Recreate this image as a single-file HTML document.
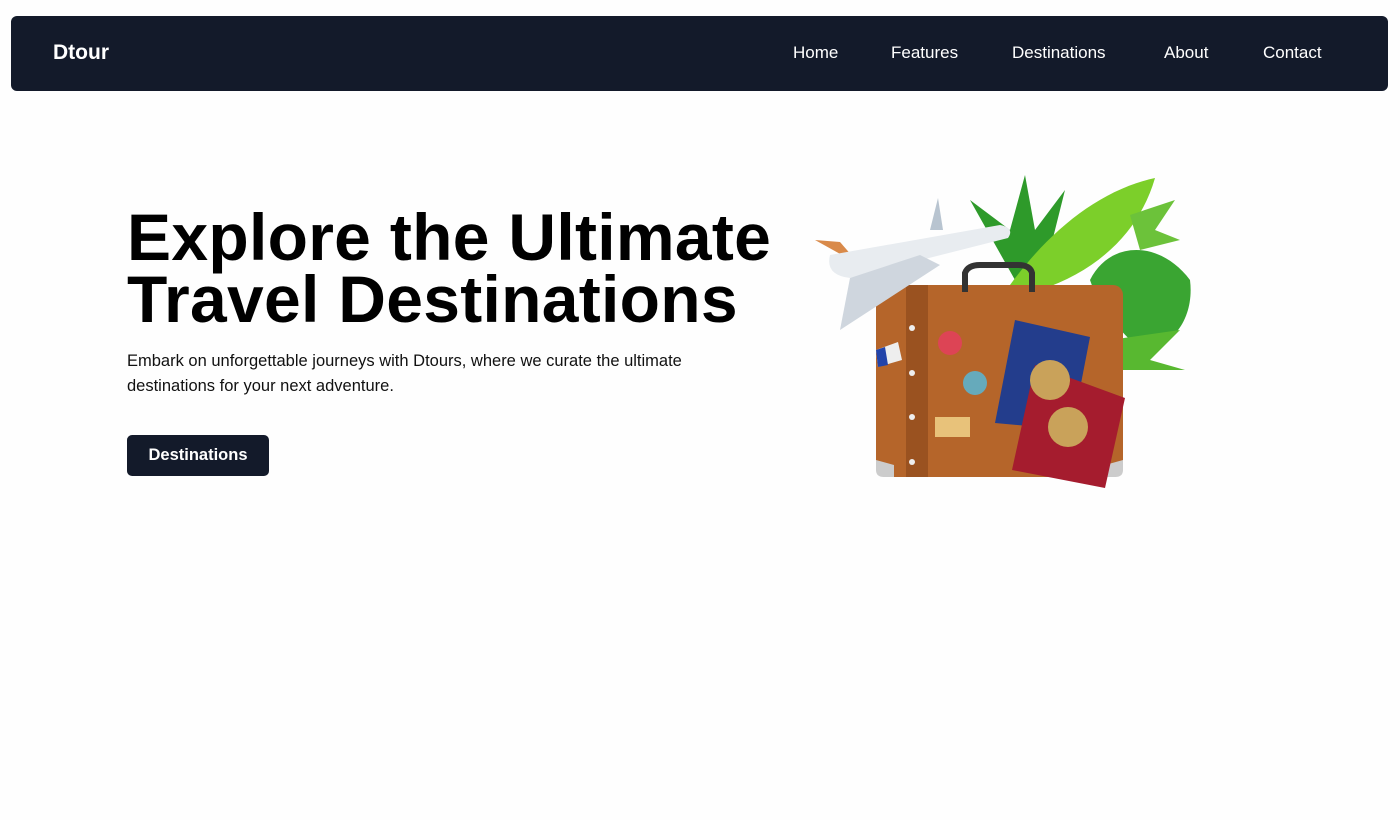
<!DOCTYPE html>
<html><head><style>
*{margin:0;padding:0;box-sizing:border-box}
body{width:1400px;height:820px;background:#fefefe;font-family:"Liberation Sans",sans-serif;position:relative;overflow:hidden}
nav{position:absolute;left:11px;top:16px;width:1377px;height:75px;background:#131a2a;border-radius:6px;color:#fff}
.logo{position:absolute;left:42px;top:25px;font-weight:bold;font-size:21px}
.links a{position:absolute;top:27px;font-size:17px;color:#fff;text-decoration:none}
h1{position:absolute;left:127px;top:206px;font-size:66px;line-height:62px;font-weight:bold;color:#000;letter-spacing:0.3px}
p{position:absolute;left:127px;top:349px;font-size:16.5px;line-height:24.5px;color:#111;width:640px}
.btn{position:absolute;left:127px;top:435px;width:142px;height:41px;background:#131a2a;border-radius:5px;color:#fff;font-weight:bold;font-size:16.5px;text-align:center;line-height:41px}
svg{position:absolute;left:810px;top:170px}
</style></head><body>
<nav><div class="logo">Dtour</div>
<div class="links"><a style="left:782px">Home</a><a style="left:880px">Features</a><a style="left:1001px">Destinations</a><a style="left:1153px">About</a><a style="left:1252px">Contact</a></div></nav>
<h1>Explore the Ultimate<br>Travel Destinations</h1>
<p>Embark on unforgettable journeys with Dtours, where we curate the ultimate destinations for your next adventure.</p>
<div class="btn">Destinations</div>
<svg width="390" height="335" viewBox="0 0 390 335">
<g fill="#2e9a2a">
<path d="M205 110 L160 30 L200 60 L215 5 L225 60 L255 20 L240 80 L280 60 L230 110Z"/>
</g>
<path d="M200 115 C240 60 290 20 345 8 C330 60 290 100 230 120Z" fill="#7ccf2a"/>
<path d="M280 110 C300 70 350 70 380 110 C385 150 360 180 330 180 C310 160 290 140 280 110Z" fill="#3aa532"/>
<path d="M300 170 L370 160 L340 190 L375 200 L310 200Z" fill="#58b830"/>
<path d="M320 45 L365 30 L345 60 L370 70 L330 80Z" fill="#6cc23a"/>
<rect x="66" y="115" width="247" height="192" rx="10" fill="#b5652a"/>
<rect x="96" y="115" width="22" height="192" fill="#9a5220"/>
<path d="M66 290 L66 300 Q66 307 74 307 L84 307 L84 295 Z" fill="#ccc"/><path d="M313 290 L313 300 Q313 307 305 307 L295 307 L295 295Z" fill="#ccc"/>
<path d="M155 122 V103 Q158 95 170 95 H208 Q220 95 222 103 V122" fill="none" stroke="#333" stroke-width="6"/>
<g fill="#eee"><circle cx="102" cy="158" r="3"/><circle cx="102" cy="203" r="3"/><circle cx="102" cy="247" r="3"/><circle cx="102" cy="292" r="3"/></g>
<path d="M66 180 L88 172 L92 190 L68 197Z" fill="#eee"/><path d="M66 180 L75 177 L78 195 L68 197Z" fill="#2244aa"/>
<circle cx="140" cy="173" r="12" fill="#d45"/>
<circle cx="165" cy="213" r="12" fill="#6ab"/>
<rect x="125" y="247" width="35" height="20" fill="#e8c27a"/>
<path d="M205 150 L280 167 L262 260 L185 253Z" fill="#233d8c"/>
<path d="M225 195 L315 228 L295 318 L202 300Z" fill="#a51c2e"/>
<circle cx="240" cy="210" r="20" fill="#c9a25a"/><circle cx="258" cy="257" r="20" fill="#c9a25a"/>
<path d="M5 70 L30 72 L50 95 Z" fill="#d98a4a"/>
<path d="M20 85 L190 55 Q205 58 198 68 L40 108 Q15 105 20 85Z" fill="#e8ecf0"/>
<path d="M40 108 L110 85 L130 95 L30 160Z" fill="#cfd6de"/>
<path d="M120 60 L128 28 L133 60Z" fill="#b8c4d0"/>
</svg>
</body></html>
